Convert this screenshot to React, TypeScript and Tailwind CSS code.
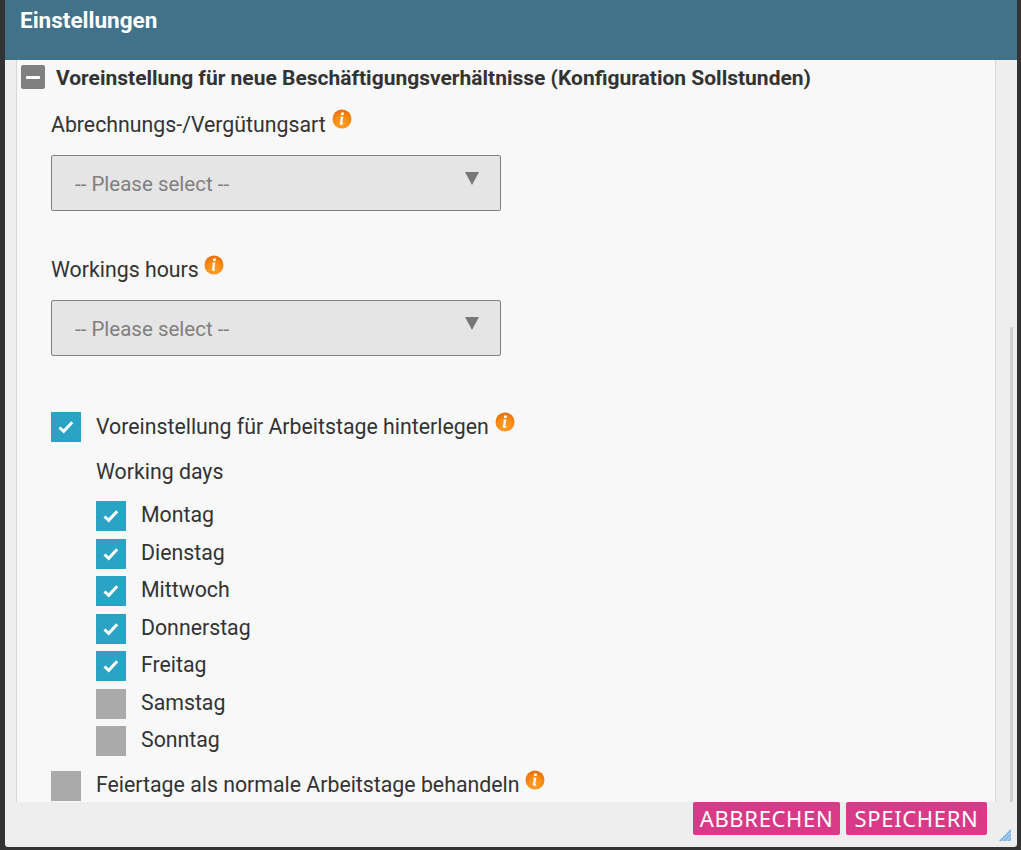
const DAYS = [
  { name: "Montag", on: true },
  { name: "Dienstag", on: true },
  { name: "Mittwoch", on: true },
  { name: "Donnerstag", on: true },
  { name: "Freitag", on: true },
  { name: "Samstag", on: false },
  { name: "Sonntag", on: false },
];

function InfoIcon({ className = "" }: { className?: string }) {
  return (
    <svg viewBox="0 0 20 20" className={`w-5 h-5 shrink-0 ${className}`}>
      <defs>
        <radialGradient id="infoFill" cx="50%" cy="75%" r="70%">
          <stop offset="0%" stopColor="#ffa22e" />
          <stop offset="65%" stopColor="#f7890f" />
          <stop offset="100%" stopColor="#ea6f08" />
        </radialGradient>
      </defs>
      <circle cx="10" cy="10" r="9.5" fill="url(#infoFill)" />
      <path d="M9.3 3.6h2.7l-.4 2.4H8.9zM8.8 7.4h2.6l-1.1 6.2c0 .6.3.6.8.4l-.2 1.6c-1.6.5-3.2.3-3-1.4l1-5.4-.8-.1z" fill="#fff" />
    </svg>
  );
}

function Checkbox({ on }: { on: boolean }) {
  return (
    <span className={`w-[30px] h-[30px] shrink-0 flex items-center justify-center ${on ? "bg-[#2ba3c4]" : "bg-[#aaaaaa]"}`}>
      {on && (
        <svg viewBox="0 0 16 14" className="w-[16px] h-[14px]">
          <path d="M1.5 7.5l4.2 3.8L14.2 2.2" fill="none" stroke="#fff" strokeWidth="3" />
        </svg>
      )}
    </span>
  );
}

function SelectBox() {
  return (
    <div className="w-[450px] h-[56px] border border-[#808080] rounded-[2px] bg-[#e5e5e5] flex items-center justify-between pl-[23px] pr-[21px]">
      <span className="text-[20.5px] leading-[30px] pt-[2px] text-[#808080]">-- Please select --</span>
      <svg viewBox="0 0 14 14" className="w-[14px] h-[14px] mb-2">
        <path d="M0 0h14L7 13z" fill="#777777" />
      </svg>
    </div>
  );
}

export default function App() {
  return (
    <div className="w-[1021px] h-[850px] overflow-hidden bg-[#333333] pl-[5px] pr-[4px] pb-[3px] font-['Roboto',sans-serif] text-[#333333]">
      <div className="h-full rounded-b-[3px] bg-[#eeeeee] flex flex-col overflow-hidden">
        <header className="h-[60px] shrink-0 bg-[#41728a] pl-[15px] pt-[5px]">
          <h1 className="text-[22.5px] leading-[30px] font-bold text-white">Einstellungen</h1>
        </header>

        <div className="flex-1 min-h-0 flex flex-col">
          <div className="h-[742px] shrink-0 flex">
            <div className="ml-[11px] w-[980px] shrink-0 border-x border-[#d8d8d8] bg-[#f8f8f8] overflow-hidden">
              <div className="flex items-center h-[24px] mt-[5px] ml-[4px] gap-[11px]">
                <span className="w-[24px] h-[24px] rounded-[2px] bg-[#808080] flex items-center justify-center">
                  <span className="w-[14px] h-[3px] rounded-[1px] bg-white" />
                </span>
                <h2 className="text-[21px] leading-[26px] pt-[2px] font-bold whitespace-nowrap">
                  Voreinstellung für neue Beschäftigungsverhältnisse (Konfiguration Sollstunden)
                </h2>
              </div>

              <div className="ml-[34px] flex flex-col text-[21.3px]">
                <div className="mt-[15px] h-[30px] flex">
                  <span className="leading-[41px]">Abrechnungs-/Vergütungsart</span>
                  <InfoIcon className="ml-[6px] mt-[5px]" />
                </div>
                <div className="mt-[21px]">
                  <SelectBox />
                </div>

                <div className="mt-[45px] h-[30px] flex">
                  <span className="leading-[28px]">Workings hours</span>
                  <InfoIcon className="ml-[5px] -mt-[1px]" />
                </div>
                <div className="mt-[14px]">
                  <SelectBox />
                </div>

                <div className="mt-[56px] flex gap-[15px]">
                  <Checkbox on />
                  <span className="leading-[30px]">Voreinstellung für Arbeitstage hinterlegen</span>
                  <InfoIcon className="-ml-[9px]" />
                </div>

                <div className="ml-[45px] mt-[15px] leading-[30px]">Working days</div>

                <div className="ml-[45px] mt-[14px] flex flex-col gap-[7.5px]">
                  {DAYS.map((day) => (
                    <div key={day.name} className="flex h-[30px] gap-[15px]">
                      <Checkbox on={day.on} />
                      <span className="leading-[27px]">{day.name}</span>
                    </div>
                  ))}
                </div>

                <div className="mt-[15px] flex gap-[15px]">
                  <Checkbox on={false} />
                  <span className="leading-[28px]">Feiertage als normale Arbeitstage behandeln</span>
                  <InfoIcon className="-ml-[9px] -mt-[1px]" />
                </div>
              </div>
            </div>

            {/* scroll track */}
            <div className="flex-1 relative">
              <div className="absolute left-[14px] top-[267px] bottom-0 w-[3px] bg-[#d0d0d0]" />
            </div>
          </div>

          <div className="flex-1 relative flex justify-end gap-[6px] pr-[30px]">
            <button className="w-[147px] h-[33px] rounded-[2px] bg-[#d83a87] text-white font-['Noto_Sans',sans-serif] text-[22px] leading-[33px] tracking-[0.65px]">
              ABBRECHEN
            </button>
            <button className="w-[141px] h-[33px] rounded-[2px] bg-[#d83a87] text-white font-['Noto_Sans',sans-serif] text-[22px] leading-[33px] tracking-[0.65px]">
              SPEICHERN
            </button>
            <svg viewBox="0 0 12 12" className="absolute right-[6px] bottom-[6px] w-[12px] h-[12px]">
              <path d="M0 12L12 0V12z" fill="#a9cdef" />
              <path d="M1 12L12 1M5 12l7-7M9 12l3-3" stroke="#6ea9e2" strokeWidth="1.6" strokeDasharray="1.5 0.8" fill="none" />
            </svg>
          </div>
        </div>
      </div>
    </div>
  );
}
